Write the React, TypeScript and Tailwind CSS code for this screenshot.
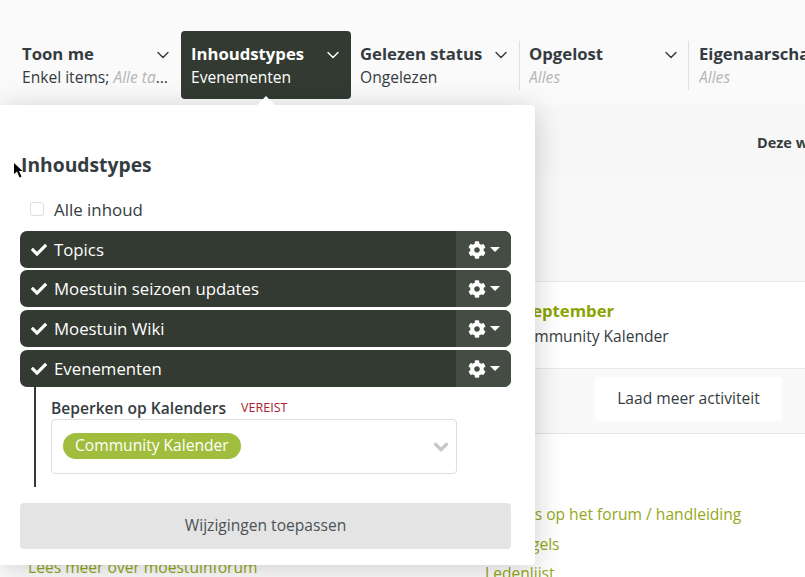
import React from "react";
import { ChevronDown } from "lucide-react";

const font = "font-['Open_Sans',sans-serif]";

interface FilterTabProps {
    title: string;
    value?: string;
    muted?: string;
    active?: boolean;
    divider?: string;
    width: string;
}

const FilterTab: React.FC<FilterTabProps> = ({ title, value, muted, active, divider, width }) => {
    return (
        <div className={`${width} relative h-[68px] shrink-0 rounded-[4px] pl-[10px] pr-[8px] pt-[12px] ${active ? "bg-[#323a32] text-white" : "text-[#353c41]"}`}>
            {divider && <div className={`absolute top-[10px] h-[49px] w-px bg-[#dfdfdf] ${divider}`} />}
            <div className="flex h-[22px] items-center justify-between">
                <span className="text-[16.7px] font-bold leading-[22px] whitespace-nowrap">{title}</span>
                <ChevronDown size={20} strokeWidth={1.7} className="mt-[1px] shrink-0" />
            </div>
            <div className="mt-[1px] truncate text-[15.6px] leading-[22px]">
                {value}
                {muted && <i className={`text-[#b5b5b5] ${value ? "ml-1" : ""}`}>{muted}</i>}
            </div>
        </div>
    );
};

const GearIcon = () => (
    <svg width="18" height="18" viewBox="0 0 512 512" fill="white">
        <path d="M487.4 315.7l-42.6-24.6c4.3-23.2 4.3-47 0-70.2l42.6-24.6c4.9-2.8 7.1-8.6 5.5-14-11.1-35.6-30-67.8-54.7-94.6-3.8-4.1-10-5.1-14.8-2.3L380.8 110c-17.9-15.4-38.5-27.3-60.8-35.1V25.8c0-5.6-3.9-10.5-9.4-11.7-36.7-8.2-74.3-7.8-109.2 0-5.5 1.2-9.4 6.1-9.4 11.7V75c-22.2 7.9-42.8 19.8-60.8 35.1L88.7 85.5c-4.9-2.8-11-1.9-14.8 2.3-24.7 26.7-43.6 58.9-54.7 94.6-1.7 5.4.6 11.2 5.5 14L67.3 221c-4.3 23.2-4.3 47 0 70.2l-42.6 24.6c-4.9 2.8-7.1 8.6-5.5 14 11.1 35.6 30 67.8 54.7 94.6 3.8 4.1 10 5.1 14.8 2.3l42.6-24.6c17.9 15.4 38.5 27.3 60.8 35.1v49.2c0 5.6 3.9 10.5 9.4 11.7 36.7 8.2 74.3 7.8 109.2 0 5.5-1.2 9.4-6.1 9.4-11.7v-49.2c22.2-7.9 42.8-19.8 60.8-35.1l42.6 24.6c4.9 2.8 11 1.9 14.8-2.3 24.7-26.7 43.6-58.9 54.7-94.6 1.5-5.5-.7-11.3-5.6-14.1zM256 336c-44.1 0-80-35.9-80-80s35.9-80 80-80 80 35.9 80 80-35.9 80-80 80z" />
    </svg>
);

const CheckIcon = () => (
    <svg width="16" height="16" viewBox="0 0 512 512" fill="white">
        <path d="M173.9 439.4L7.5 273c-10-10-10-26.2 0-36.2l36.2-36.2c10-10 26.2-10 36.2 0L192 312.7 432.1 72.6c10-10 26.2-10 36.2 0l36.2 36.2c10 10 10 26.2 0 36.2L210.1 439.4c-10 10-26.2 10-36.2 0z" />
    </svg>
);

const ContentRow: React.FC<{ label: string; className: string }> = ({ label, className }) => {
    return (
        <div className={`flex h-[37px] overflow-hidden rounded-[7px] bg-[#323a32] text-white ${className}`}>
            <div className="flex flex-1 items-center pl-[11px]">
                <CheckIcon />
                <span className="ml-[7px] mt-[2px] text-[16.8px] leading-none">{label}</span>
            </div>
            <div className="flex w-[55px] items-center bg-[#454c44] pl-[12px]">
                <GearIcon />
                <span className="ml-[4px] h-0 w-0 border-x-[5px] border-t-[5px] border-x-transparent border-t-white" />
            </div>
        </div>
    );
};

export default function App() {
    return (
        <div className={`${font} relative h-[577px] w-[805px] overflow-hidden bg-white text-[#353c41]`}>
            {/* filter bar */}
            <div className="flex h-[105px] items-start overflow-hidden bg-[#fafafa] pl-[12px] pt-[31px]">
                <FilterTab width="w-[169px]" title="Toon me" value="Enkel items;" muted="Alle tags en meer" />
                <FilterTab width="w-[170px]" title="Inhoudstypes" value="Evenementen" active />
                <FilterTab width="w-[169px] -ml-px" title="Gelezen status" value="Ongelezen" />
                <FilterTab width="w-[170px]" title="Opgelost" muted="Alles" divider="left-0" />
                <FilterTab width="w-[168px]" title="Eigenaarschap" muted="Alles" divider="left-[-1px]" />
            </div>

            {/* content behind the menu */}
            <div className="flex h-[70px] justify-end bg-[#f7f7f7] pt-[28px] text-[14.5px] font-bold leading-[20px]">
                <span className="w-[48px] overflow-hidden whitespace-nowrap">Deze week</span>
            </div>
            <div className="h-[106px] bg-[#f9f9f9]" />
            <div className="flex h-[88px] flex-col justify-center border-y border-[#e8e8e8] bg-white pb-[5px] pl-[515px]">
                <span className="-ml-[5px] whitespace-nowrap text-[16.7px] font-bold leading-[24px] text-[#8ba300]">1 september</span>
                <span className="mt-[2px] whitespace-nowrap text-[15.6px] leading-[22px]">Community Kalender</span>
            </div>
            <div className="flex h-[65px] items-center border-b border-[#e5e5e5] bg-[#f9f9f9] pb-[5px] pl-[595px]">
                <div className="flex h-[44px] w-[187px] items-center justify-center rounded-[4px] bg-white text-[15.6px]">
                    Laad meer activiteit
                </div>
            </div>
            <div className="mt-[69px] flex justify-between pl-[28px] text-[15.6px] leading-[22px] text-[#95a81a]">
                <span className="mt-[53px] whitespace-nowrap">Lees meer over moestuinforum</span>
                <div className="w-[320px] shrink-0">
                    <div className="-ml-[2px]">Handigs op het forum / handleiding</div>
                    <div className="mt-[8px]">Spelregels</div>
                    <div className="mt-[7px]">Ledenlijst</div>
                </div>
            </div>

            {/* dropdown menu */}
            <div className="absolute left-0 top-[105px] h-[460px] w-[535px] rounded-r-[4px] bg-white px-[20px] shadow-[0_5px_30px_rgba(0,0,0,0.2)]">
                <span className="absolute left-[257px] top-[-9px] h-0 w-0 border-x-[9px] border-b-[9px] border-x-transparent border-b-white" />
                <h2 className="ml-[1px] mt-[46px] text-[19.3px] font-bold leading-[27px]">Inhoudstypes</h2>
                <label className="mt-[20px] flex h-[24px] items-center pl-[10px] text-[16.9px]">
                    <span className="mb-[2px] h-[14px] w-[14px] rounded-[3px] border border-[#ddd] bg-white" />
                    <span className="ml-[10px]">Alle inhoud</span>
                </label>
                <div className="mt-[9px] flex w-[491px] flex-col">
                    <ContentRow label="Topics" className="" />
                    <ContentRow label="Moestuin seizoen updates" className="mt-[2px]" />
                    <ContentRow label="Moestuin Wiki" className="mt-[3px]" />
                    <ContentRow label="Evenementen" className="mt-[3px]" />
                </div>
                <div className="ml-[14px] h-[100px] w-[423px] border-l-2 border-[#323a32] pl-[15px] pt-[11px]">
                    <div className="flex h-[20px] items-center">
                        <span className="whitespace-nowrap text-[15.6px] font-semibold leading-[20px]">Beperken op Kalenders</span>
                        <span className="ml-[15px] text-[12.5px] leading-[20px] text-[#a8202e]">VEREIST</span>
                    </div>
                    <div className="mt-[1px] flex h-[55px] w-[406px] items-center justify-between rounded-[4px] border border-[#ddd] pl-[11px] pr-[4px]">
                        <span className="mb-[1px] flex h-[26px] items-center rounded-full bg-[#a0bd3d] px-[12px] text-[15.6px] text-white">
                            Community Kalender
                        </span>
                        <ChevronDown size={22} strokeWidth={3.5} className="mt-[1px] text-[#c8c8c8]" />
                    </div>
                </div>
                <button className="mt-[16px] h-[46px] w-[491px] rounded-[4px] bg-[#e4e4e4] pb-[1px] text-[15.6px] text-[#4b5257]">
                    Wijzigingen toepassen
                </button>
            </div>

            {/* mouse pointer */}
            <svg className="absolute left-[14px] top-[163px]" width="10" height="16" viewBox="0 0 10 16">
                <path d="M0 0 L0 11 L3 8.5 L5.5 14.5 L7.5 13.5 L5 8 L8.5 8 Z" fill="black" />
            </svg>
        </div>
    );
}
